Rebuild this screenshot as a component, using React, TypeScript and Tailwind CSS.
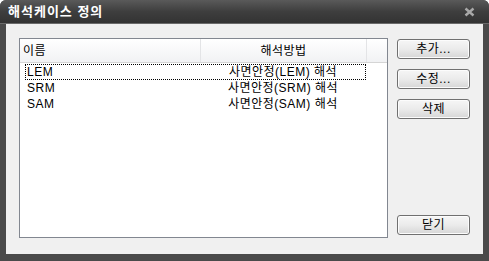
const rows = [
  { name: "LEM", method: "사면안정(LEM) 해석" },
  { name: "SRM", method: "사면안정(SRM) 해석" },
  { name: "SAM", method: "사면안정(SAM) 해석" },
];

function Btn({ label }: { label: string }) {
  return (
    <button className="h-[20px] w-[73px] rounded-[3px] border border-[#707070] bg-gradient-to-b from-[#f6f6f6] via-[#ebebeb] to-[#d6d6d6] text-[12px] leading-none tracking-[0.5px] text-black shadow-[inset_0_0_0_1px_#fcfcfc]">
      {label}
    </button>
  );
}

export default function App() {
  return (
    <div
      className="flex h-[261px] w-[489px] flex-col overflow-hidden rounded-t-[6px] bg-[#4a4a4a] text-black"
      style={{ fontFamily: '"Liberation Sans", "Noto Sans CJK KR", sans-serif' }}
    >
      {/* title bar */}
      <div className="flex h-[24px] shrink-0 items-center justify-between border-b border-[#6a6a6a] bg-gradient-to-b from-[#5a5a5a] via-[#3e3e3e] to-[#333333] pl-[8px] pr-[14px]">
        <span className="text-[13px] font-bold tracking-[1px] text-white">해석케이스 정의</span>
        <svg width="11" height="10" viewBox="0 0 11 10">
          <path d="M1.5 1.5 L9.5 8.5 M9.5 1.5 L1.5 8.5" stroke="#a8a8a8" strokeWidth="2.4" />
        </svg>
      </div>

      {/* body */}
      <div className="mx-[6px] mb-[7px] flex flex-1 bg-[#f0f0f0] pb-[16px] pl-[13px] pr-[13px] pt-[14px]">
        <div className="flex flex-1 flex-col border border-[#828790] bg-white">
          <div className="flex h-[24px] border-b border-[#d5d5d5] bg-gradient-to-b from-white to-[#f1f2f4] text-[12px] tracking-[0.5px]">
            <div className="flex w-[181px] items-center border-r border-[#e3e4e6] pl-[3px]">이름</div>
            <div className="flex w-[166px] items-center justify-center border-r border-[#e3e4e6]">해석방법</div>
            <div className="flex-1" />
          </div>
          <div className="pl-[5px] pt-[1px] text-[12px] tracking-[0.5px]">
            {rows.map((r, i) => (
              <div
                key={r.name}
                className={`flex h-[16px] w-[341px] items-center ${i === 0 ? "border border-dotted border-black" : "border border-transparent"}`}
              >
                <span className="w-[175px] pl-[1px]">{r.name}</span>
                <span className="w-[164px] text-center">{r.method}</span>
              </div>
            ))}
          </div>
        </div>

        <div className="ml-[9px] flex flex-col pt-[1px]">
          <div className="flex flex-col gap-[10px]">
            <Btn label="추가..." />
            <Btn label="수정..." />
            <Btn label="삭제" />
          </div>
          <div className="mt-auto mb-[2px]">
            <Btn label="닫기" />
          </div>
        </div>
      </div>
    </div>
  );
}
